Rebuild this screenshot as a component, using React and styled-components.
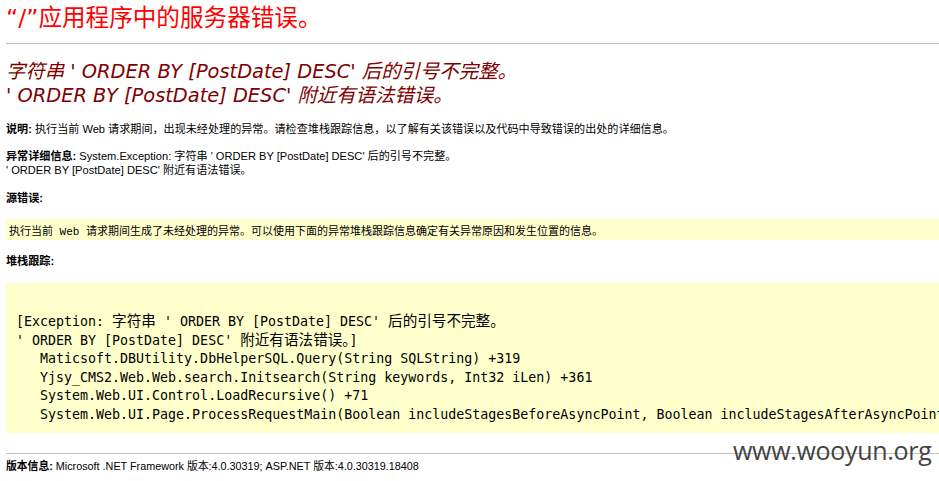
import React from "react";
import styled, { createGlobalStyle } from "styled-components";

const GlobalStyle = createGlobalStyle`
  html, body {
    margin: 0;
    padding: 0;
    background: #fff;
    overflow: hidden;
  }
`;

const traceLines = [
  { text: "[Exception: ", cjk: "字符串", rest: " ' ORDER BY [PostDate] DESC' ", tail: "后的引号不完整。" },
  { text: "' ORDER BY [PostDate] DESC' ", cjk: "附近有语法错误。", rest: "]" },
  { text: "   Maticsoft.DBUtility.DbHelperSQL.Query(String SQLString) +319" },
  { text: "   Yjsy_CMS2.Web.Web.search.Initsearch(String keywords, Int32 iLen) +361" },
  { text: "   System.Web.UI.Control.LoadRecursive() +71" },
  { text: "   System.Web.UI.Page.ProcessRequestMain(Boolean includeStagesBeforeAsyncPoint, Boolean includeStagesAfterAsyncPoint) +4498" },
];

export default function App() {
  return (
    <Page>
      <GlobalStyle />
      <Title>“/”应用程序中的服务器错误。</Title>
      <Rule $top={10} />

      <Subtitle>
        字符串 ' ORDER BY [PostDate] DESC' 后的引号不完整。
        <br />
        ' ORDER BY [PostDate] DESC' 附近有语法错误。
      </Subtitle>

      <Para $top={14}>
        <Label>说明: </Label>
        执行当前 Web 请求期间，出现未经处理的异常。请检查堆栈跟踪信息，以了解有关该错误以及代码中导致错误的出处的详细信息。
      </Para>

      <Para $top={13}>
        <Label>异常详细信息: </Label>
        System.Exception: 字符串 ' ORDER BY [PostDate] DESC' 后的引号不完整。
        <br />
        ' ORDER BY [PostDate] DESC' 附近有语法错误。
      </Para>

      <Para $top={14}>
        <Label>源错误:</Label>
      </Para>

      <NoteBox>
        <Code>执行当前 Web 请求期间生成了未经处理的异常。可以使用下面的异常堆栈跟踪信息确定有关异常原因和发生位置的信息。</Code>
      </NoteBox>

      <Para $top={14}>
        <Label>堆栈跟踪:</Label>
      </Para>

      <TraceBox>
        <Trace>
          {traceLines.map((line, index) => (
            <TraceLine key={index}>
              {line.text}
              {line.cjk ? <Wide>{line.cjk}</Wide> : null}
              {line.rest}
              {line.tail ? <Wide>{line.tail}</Wide> : null}
            </TraceLine>
          ))}
        </Trace>
      </TraceBox>

      <Rule $top={20} />

      <Para $top={5} $size={10.8}>
        <Label>版本信息: </Label>
        Microsoft .NET Framework 版本:4.0.30319; ASP.NET 版本:4.0.30319.18408
      </Para>

      <Watermark>www.wooyun.org</Watermark>
    </Page>
  );
}

const Page = styled.div`
  position: relative;
  width: 939px;
  height: 481px;
  box-sizing: border-box;
  padding: 3px 0 0 6px;
  overflow: hidden;
  font-family: "Liberation Sans", "Noto Sans CJK SC", sans-serif;
  font-size: 11.1px;
  color: #000;
`;

const Title = styled.h1`
  margin: 0;
  font-family: "DejaVu Sans", "Noto Sans CJK SC", sans-serif;
  font-weight: normal;
  font-size: 23.6px;
  line-height: 30px;
  color: #ff0000;
`;

const Rule = styled.div`
  margin-top: ${(p) => p.$top}px;
  height: 1px;
  background: #c0c0c0;
`;

const Subtitle = styled.h2`
  margin: 16px 0 0;
  font-family: "DejaVu Sans", "Noto Sans CJK SC", sans-serif;
  font-style: italic;
  font-weight: normal;
  font-size: 19.4px;
  line-height: 24px;
  color: #800000;
`;

const Para = styled.p`
  margin: ${(p) => p.$top}px 0 0;
  font-size: ${(p) => (p.$size ? `${p.$size}px` : "inherit")};
  line-height: 14px;
  white-space: nowrap;
`;

const Label = styled.b`
  font-weight: bold;
`;

const NoteBox = styled.div`
  margin-top: 14px;
  height: 21px;
  background: #ffffcc;
  display: flex;
  align-items: center;
  padding-left: 3px;
`;

const Code = styled.code`
  font-family: "Liberation Mono", "Noto Sans CJK SC", monospace;
  font-size: 11px;
  white-space: nowrap;
`;

const TraceBox = styled.div`
  margin-top: 15px;
  height: 150px;
  box-sizing: border-box;
  background: #ffffcc;
  padding: 30px 0 0 10px;
  overflow: hidden;
`;

const Trace = styled.pre`
  margin: 0;
  font-family: "DejaVu Sans Mono", "Noto Sans CJK SC", monospace;
  font-size: 13.3px;
  line-height: 18.4px;
  white-space: pre;
`;

const TraceLine = styled.div`
  height: 18.5px;
`;

const Wide = styled.span`
  font-family: "Noto Sans CJK SC", sans-serif;
  font-size: 14.6px;
  line-height: 1;
`;

const Watermark = styled.div`
  position: absolute;
  left: 733px;
  top: 435px;
  font-family: "Open Sans", "DejaVu Sans", sans-serif;
  font-size: 25px;
  line-height: 30px;
  color: #444;
  letter-spacing: -0.3px;
`;
